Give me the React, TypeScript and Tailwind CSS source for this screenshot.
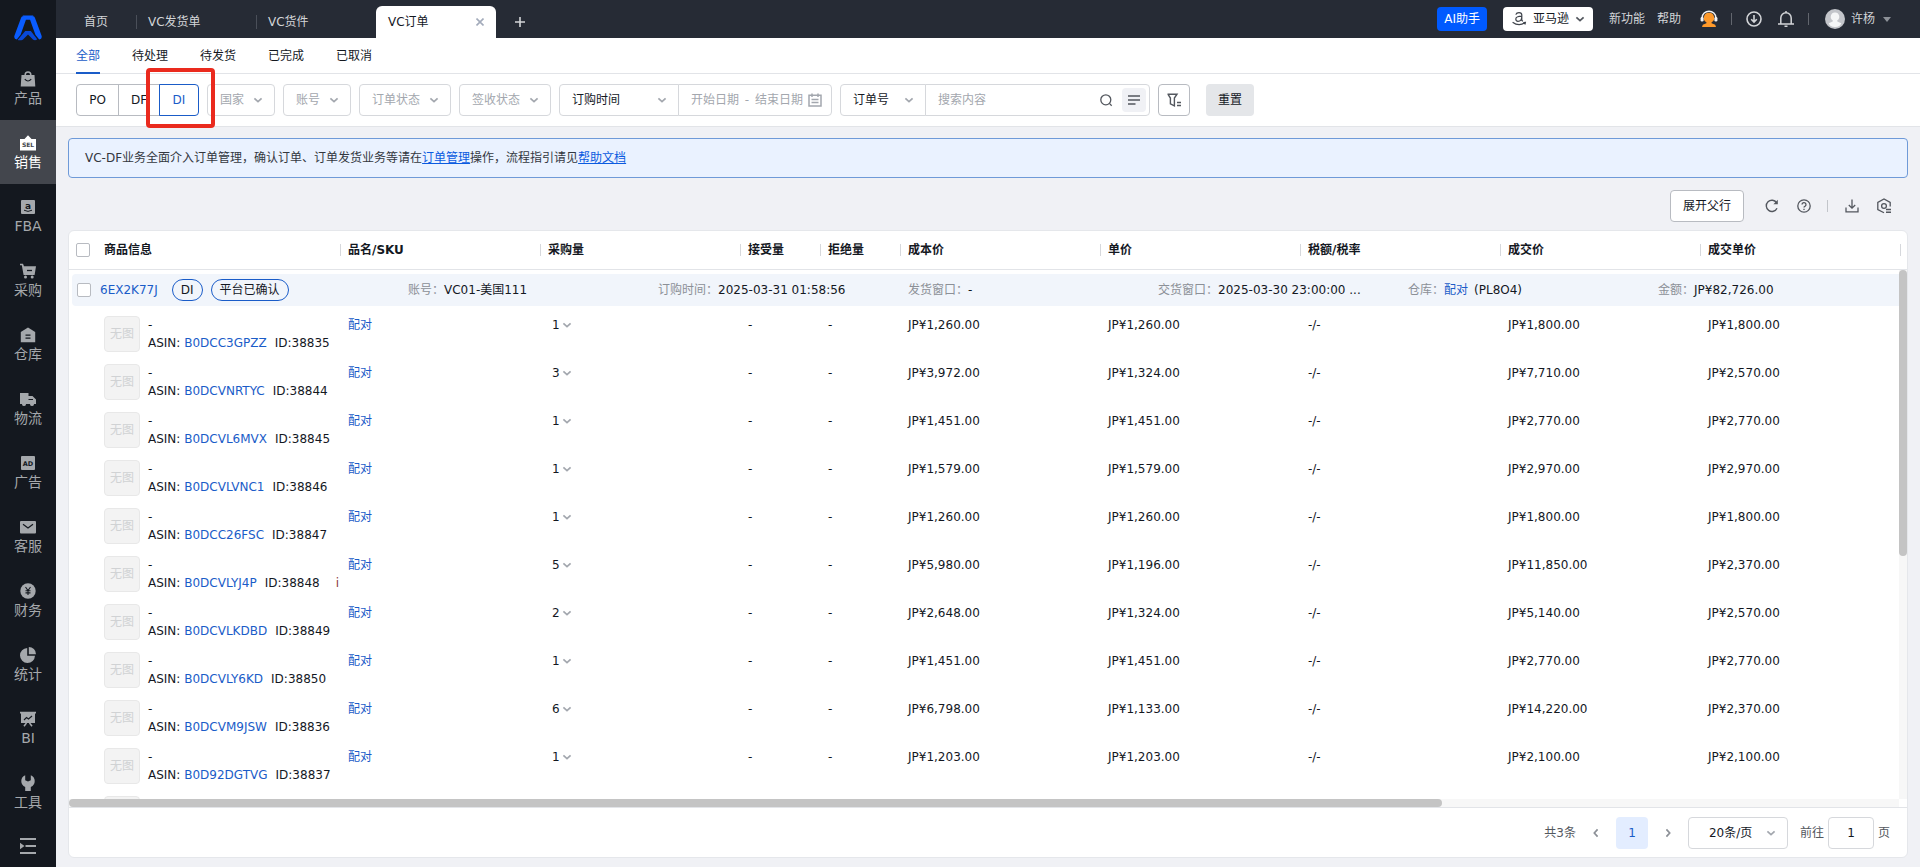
import { ReactNode } from "react";
import clsx from "clsx";

type IconProps = { className?: string };

const Chevron = ({ className }: IconProps) => (
  <svg viewBox="0 0 10 10" className={clsx("h-2.5 w-2.5", className)} fill="none" stroke="currentColor" strokeWidth="1.7">
    <path d="M1.4 3.4 5 6.7l3.6-3.3" />
  </svg>
);

const Logo = () => (
  <svg viewBox="0 0 28 26" className="h-[26px] w-7">
    <path d="M8.6 1.2h4.6L6.6 19.8 2.8 24.6Q-.6 24 .5 20.4L7 3Q7.5 1.5 8.6 1.2Z" fill="#0a5cff" />
    <path d="M19.4 1.2h-4.6l6.6 18.6 3.8 4.8q3.4-.6 2.3-4.2L21 3q-.5-1.5-1.6-1.8Z" fill="#0a5cff" />
    <path d="M8.6.6h10.8l-3 4.2h-4.8Z" fill="#0a5cff" />
    <path d="M11.2 16h5.6l6.4 8.2q-1.6 1.6-4 .6L14 19.4l-5.2 5.4q-2.4 1-5.2.2Z" fill="#0848d8" />
  </svg>
);

const navItems: { label: string; icon: ReactNode }[] = [
  {
    label: "产品",
    icon: (
      <>
        <path d="M5.2 4.5V3.8a2.8 2.8 0 0 1 5.6 0v.7" fill="none" stroke="currentColor" strokeWidth="1.5" />
        <path d="M1.5 4h13l.8 11.5H.7Z" />
        <path d="M4.8 8.2q3.2 3.6 6.4 0" fill="none" stroke="#14181f" strokeWidth="1.2" />
      </>
    ),
  },
  {
    label: "销售",
    icon: (
      <>
        <path d="M0 4h4.5L8 .3 11.5 4H16v11.5H0Z" />
        <text x="8" y="11.8" textAnchor="middle" fontSize="6" fontWeight="700" fill="#43464d">SEL</text>
      </>
    ),
  },
  {
    label: "FBA",
    icon: (
      <>
        <rect x="1" y="1" width="14" height="14" rx="1" />
        <text x="8" y="9.5" textAnchor="middle" fontSize="9" fontWeight="700" fill="#14181f">a</text>
        <path d="M4 11.2q4 2.4 8 0" fill="none" stroke="#14181f" />
      </>
    ),
  },
  {
    label: "采购",
    icon: (
      <>
        <path d="M0 .8h3l1 2.4h12l-1.4 8.8H3.6L1.8 2.2H0Z" />
        <circle cx="5.5" cy="14" r="1.5" />
        <circle cx="12.2" cy="14" r="1.5" />
        <path d="M7 7.5h5" stroke="#14181f" strokeWidth="1.3" />
      </>
    ),
  },
  {
    label: "仓库",
    icon: (
      <>
        <path d="M8 .6 15.2 5v10.2H.8V5Z" />
        <path d="M5.5 8.2h5M5.5 11.2h5" stroke="#14181f" strokeWidth="1.2" />
      </>
    ),
  },
  {
    label: "物流",
    icon: (
      <>
        <path d="M0 2h8.5v3h4L16 8.5V13H0Z" />
        <circle cx="4" cy="13.2" r="1.9" />
        <circle cx="12" cy="13.2" r="1.9" />
        <path d="M8.5 8.5h4.5" stroke="#14181f" />
      </>
    ),
  },
  {
    label: "广告",
    icon: (
      <>
        <rect x="1" y="1" width="14" height="14" rx="1" />
        <text x="8" y="10.5" textAnchor="middle" fontSize="6.5" fontWeight="700" fill="#14181f">AD</text>
      </>
    ),
  },
  {
    label: "客服",
    icon: (
      <>
        <rect x="0" y="2" width="16" height="12.5" rx="1" />
        <path d="M3 5.2 8 9l5-3.8" fill="none" stroke="#14181f" strokeWidth="1.2" />
      </>
    ),
  },
  {
    label: "财务",
    icon: (
      <>
        <circle cx="8" cy="8" r="7.7" />
        <path d="M5.5 4 8 7.5 10.5 4M8 7.5V12M5.5 7.8h5M5.5 9.9h5" fill="none" stroke="#14181f" strokeWidth="1.1" />
      </>
    ),
  },
  {
    label: "统计",
    icon: (
      <>
        <path d="M7.2 1v7.8H15A7.5 7.5 0 1 1 7.2 1Z" />
        <path d="M8.8 0A7.2 7.2 0 0 1 16 7.2H8.8Z" />
      </>
    ),
  },
  {
    label: "BI",
    icon: (
      <>
        <path d="M0 .8h16v1.7h-1V12H1V2.5H0Z" />
        <path d="M6.5 12 4 15.3M9.5 12l2.5 3.3" stroke="currentColor" strokeWidth="1.5" />
        <path d="m4 9 2.5-2.5 2 1.5L12 5" fill="none" stroke="#14181f" strokeWidth="1.1" />
      </>
    ),
  },
  {
    label: "工具",
    icon: <path d="M5.2.2v5L8 6.6l2.8-1.4v-5A6.4 6.4 0 0 1 10.8 12v4H5.2v-4A6.4 6.4 0 0 1 5.2.2Z" />,
  },
];

const columns = ["商品信息", "品名/SKU", "采购量", "接受量", "拒绝量", "成本价", "单价", "税额/税率", "成交价", "成交单价"];

const rows = [
  { asin: "B0DCC3GPZZ", id: "38835", qty: 1, cost: "1,260.00", unit: "1,260.00", deal: "1,800.00", dealUnit: "1,800.00" },
  { asin: "B0DCVNRTYC", id: "38844", qty: 3, cost: "3,972.00", unit: "1,324.00", deal: "7,710.00", dealUnit: "2,570.00" },
  { asin: "B0DCVL6MVX", id: "38845", qty: 1, cost: "1,451.00", unit: "1,451.00", deal: "2,770.00", dealUnit: "2,770.00" },
  { asin: "B0DCVLVNC1", id: "38846", qty: 1, cost: "1,579.00", unit: "1,579.00", deal: "2,970.00", dealUnit: "2,970.00" },
  { asin: "B0DCC26FSC", id: "38847", qty: 1, cost: "1,260.00", unit: "1,260.00", deal: "1,800.00", dealUnit: "1,800.00" },
  { asin: "B0DCVLYJ4P", id: "38848", qty: 5, cost: "5,980.00", unit: "1,196.00", deal: "11,850.00", dealUnit: "2,370.00", mark: "i" },
  { asin: "B0DCVLKDBD", id: "38849", qty: 2, cost: "2,648.00", unit: "1,324.00", deal: "5,140.00", dealUnit: "2,570.00" },
  { asin: "B0DCVLY6KD", id: "38850", qty: 1, cost: "1,451.00", unit: "1,451.00", deal: "2,770.00", dealUnit: "2,770.00" },
  { asin: "B0DCVM9JSW", id: "38836", qty: 6, cost: "6,798.00", unit: "1,133.00", deal: "14,220.00", dealUnit: "2,370.00" },
  { asin: "B0D92DGTVG", id: "38837", qty: 1, cost: "1,203.00", unit: "1,203.00", deal: "2,100.00", dealUnit: "2,100.00" },
];

const Sidebar = () => (
  <aside className="flex w-14 shrink-0 flex-col bg-[#14181f] text-[#a5a8ac]">
    <div className="flex h-14 items-center justify-center">
      <Logo />
    </div>
    <nav className="flex flex-col">
      {navItems.map((item) => (
        <a
          key={item.label}
          href="#"
          className={clsx(
            "flex h-16 flex-col items-center pt-[15px]",
            item.label === "销售" && "bg-[#43464d] text-white",
          )}
        >
          <svg viewBox="0 0 16 16" className="h-4 w-4" fill="currentColor">
            {item.icon}
          </svg>
          <span className="text-sm leading-[22px]">{item.label}</span>
        </a>
      ))}
    </nav>
    <button aria-label="展开菜单" className="flex flex-1 items-center justify-center">
      <svg viewBox="0 0 16 16" className="h-4 w-4" fill="currentColor">
        <path d="M0 0h16v2H0ZM5.5 7H16v2H5.5ZM0 14h16v2H0ZM0 4.8 4.5 8 0 11.2Z" />
      </svg>
    </button>
  </aside>
);

const TopBar = () => (
  <header className="flex h-[38px] shrink-0 items-end bg-[#262b35] text-[#d3d5d8]">
    <a href="#" className="flex h-8 w-20 items-center justify-center">首页</a>
    {["VC发货单", "VC货件"].map((tab) => (
      <a key={tab} href="#" className="flex h-8 w-[120px] items-center">
        <span className="h-3.5 w-px bg-[#4a4f59]" />
        <span className="ml-[11px]">{tab}</span>
      </a>
    ))}
    <div className="flex h-8 w-[120px] items-center justify-between rounded-t-md bg-white px-3 text-[#14181f]">
      <a href="#">VC订单</a>
      <button aria-label="关闭">
        <svg viewBox="0 0 8 8" className="h-2 w-2" stroke="#a3abbb" strokeWidth="1.6">
          <path d="m.5.5 7 7m0-7-7 7" />
        </svg>
      </button>
    </div>
    <button aria-label="新增标签" className="flex h-8 w-12 items-center justify-center">
      <svg viewBox="0 0 10 10" className="h-2.5 w-2.5" stroke="currentColor" strokeWidth="1.6">
        <path d="M5 0v10M0 5h10" />
      </svg>
    </button>

    <div className="ml-auto flex h-full items-center pr-[29px]">
      <button className="h-6 rounded bg-[#005aff] px-[7px] text-white">AI助手</button>
      <button className="ml-4 flex h-6 items-center rounded bg-white px-2 text-[#14181f]">
        <svg viewBox="0 0 16 16" className="h-4 w-4" fill="none" stroke="#3f444c" strokeWidth="1.2">
          <path d="M4.8 3.6Q5.5 1.6 8 1.6q2.8 0 2.8 2.4v5.2l1 1.2M10.8 5.2q-6 0-6 2.9 0 2.2 2.2 2.2 3.8 0 3.8-5.1M1.6 11.2q6 4.6 12.3.6M12.2 11.5l2.2-.2-.5 2.2" />
        </svg>
        <span className="ml-1.5">亚马逊</span>
        <Chevron className="ml-1.5 text-[#53575e]" />
      </button>
      <a href="#" className="ml-4">新功能</a>
      <a href="#" className="ml-3">帮助</a>
      <button aria-label="客服" className="ml-[19px]">
        <svg viewBox="0 0 18 18" className="h-[18px] w-[18px]">
          <path d="M2.2 9V7.5a6.8 6.3 0 0 1 13.6 0V9" fill="none" stroke="#f1f2f4" strokeWidth="1.5" />
          <rect x=".6" y="7" width="3" height="4.5" rx="1.3" fill="#f1f2f4" />
          <rect x="14.4" y="7" width="3" height="4.5" rx="1.3" fill="#f1f2f4" />
          <path d="M9 2.8a4.8 5 0 0 1 2.6 9.4v1l3.6 1.6.8 2.2H2l.8-2.2 3.6-1.6v-1A4.800 5 0 0 1 9 2.8Z" fill="#ff9a2b" />
        </svg>
      </button>
      <span className="ml-[13px] h-3 w-px bg-[#62666e]" />
      <button aria-label="下载中心" className="ml-3.5">
        <svg viewBox="0 0 16 16" className="h-4 w-4" fill="none" stroke="currentColor" strokeWidth="1.6">
          <circle cx="8" cy="8" r="7" />
          <path d="M8 4v7M5.2 8.2 8 11l2.8-2.8" />
        </svg>
      </button>
      <button aria-label="消息" className="ml-4">
        <svg viewBox="0 0 16 16" className="h-4 w-4" fill="none" stroke="currentColor" strokeWidth="1.5">
          <path d="M0 13h16M2.800 13V7a5.2 5.2 0 0 1 10.4 0v6M8 2V0M6.5 15.2h3" />
        </svg>
      </button>
      <span className="ml-3.5 h-3 w-px bg-[#62666e]" />
      <button className="ml-4 flex items-center gap-1.5">
        <svg viewBox="0 0 20 20" className="h-5 w-5">
          <circle cx="10" cy="10" r="10" fill="#c3c5ca" />
          <path d="M10 3.5a4 4.2 0 0 1 2.3 7.8v1.2l4 1.7-1.3 2.2q-5 3-10 0l-1.3-2.2 4-1.7v-1.2A4 4.2 0 0 1 10 3.5Z" fill="#f5f6f7" />
        </svg>
        <span>许杨</span>
        <svg viewBox="0 0 8 5" className="ml-0.5 h-[5px] w-2" fill="#8d9198">
          <path d="M0 0h8L4 5Z" />
        </svg>
      </button>
    </div>
  </header>
);

type FilterSelectProps = { label: string; className?: string; dark?: boolean };

const FilterSelect = ({ label, className, dark }: FilterSelectProps) => (
  <div className={clsx("relative h-8 border border-[#d6d8dc] bg-white", dark ? "text-[#14181f]" : "text-[#a3a7ae]", className)}>
    <select aria-label={label} className="h-full w-full appearance-none pl-3 outline-none">
      <option>{label}</option>
    </select>
    <Chevron className="pointer-events-none absolute right-[11px] top-2.5 text-[#a3a7ae]" />
  </div>
);

const FilterBar = () => (
  <div className="flex h-[53px] shrink-0 items-center gap-2 border-b border-[#e2e4e8] bg-white px-5">
    <div className="relative flex">
      <button className="h-8 w-[43px] rounded-l border border-[#b8bbc1]">PO</button>
      <button className="-ml-px h-8 w-[42px] border border-[#b8bbc1]">DF</button>
      <button className="-ml-px h-8 w-10 rounded-r border border-[#1a5cc8] text-[#1a5cc8]">DI</button>
      <div className="pointer-events-none absolute -bottom-3 -right-4 -top-4 z-10 w-[69px] rounded border-4 border-[#ea2a1e]" />
    </div>
    <FilterSelect label="国家" className="w-[68px] rounded" />
    <FilterSelect label="账号" className="w-[68px] rounded" />
    <FilterSelect label="订单状态" className="w-[92px] rounded" />
    <FilterSelect label="签收状态" className="w-[92px] rounded" />
    <div className="flex">
      <FilterSelect label="订购时间" dark className="w-[120px] rounded-l" />
      <div className="-ml-px flex h-8 w-[154px] items-center rounded-r border border-[#d6d8dc] pl-3 pr-[9px] text-[#a3a7ae]">
        <input aria-label="开始日期" placeholder="开始日期" className="w-12 outline-none placeholder:text-[#a3a7ae]" />
        <span className="w-4 text-center">-</span>
        <input aria-label="结束日期" placeholder="结束日期" className="w-12 outline-none placeholder:text-[#a3a7ae]" />
        <svg viewBox="0 0 14 14" className="ml-auto h-3.5 w-3.5" fill="none" stroke="currentColor" strokeWidth="1.5">
          <path d="M1 2.2h12v10.800H1ZM4 .5v3.500M10 .5v3.500M3.500 6.500h7M3.500 9.500h7" />
        </svg>
      </div>
    </div>
    <div className="flex">
      <FilterSelect label="订单号" dark className="w-[86px] rounded-l" />
      <div className="-ml-px flex h-8 w-[225px] items-center rounded-r border border-[#d6d8dc] pl-3 pr-[3px]">
        <input aria-label="搜索内容" placeholder="搜索内容" className="min-w-0 flex-1 outline-none placeholder:text-[#a3a7ae]" />
        <button aria-label="搜索" className="mr-[9px]">
          <svg viewBox="0 0 14 14" className="h-3.5 w-3.5" fill="none" stroke="#53575e" strokeWidth="1.3">
            <circle cx="6.8" cy="6.8" r="5" />
            <path d="m10.400 10.400 2.300 2.300" />
          </svg>
        </button>
        <button aria-label="批量搜索" className="flex h-6 w-6 items-center justify-center rounded bg-[#f0f1f5]">
          <svg viewBox="0 0 12 10" className="h-2.5 w-3" stroke="#53575e" strokeWidth="1.6">
            <path d="M0 1h12M0 5h12M0 9h7.500" />
          </svg>
        </button>
      </div>
    </div>
    <button aria-label="更多筛选" className="flex h-8 w-8 items-center justify-center rounded border border-[#b8bbc1]">
      <svg viewBox="0 0 14 14" className="h-3.5 w-3.5" fill="none" stroke="#53575e" strokeWidth="1.400">
        <path d="M.5 1.2h9.500L7.400 5v7.800l-4-2V5L.9 1.2M10 9.500h4M10 12.500h4" />
      </svg>
    </button>
    <button className="ml-2 h-8 w-12 rounded bg-[#e4e6e9]">重置</button>
  </div>
);

const Toolbar = () => (
  <div className="flex items-center justify-end pr-4 text-[#53575e]">
    <button className="h-8 rounded border border-[#b8bbc1] bg-white px-3 text-[#14181f]">展开父行</button>
    <button aria-label="刷新" className="ml-[21px]">
      <svg viewBox="0 0 14 14" className="h-3.5 w-3.5" fill="none" stroke="currentColor" strokeWidth="1.4">
        <path d="M12 9.2A5.600 5.600 0 1 1 11.600 3.800" />
        <path d="M12.800.8v4.400H8.400Z" fill="currentColor" stroke="none" />
      </svg>
    </button>
    <button aria-label="帮助" className="ml-[18px]">
      <svg viewBox="0 0 14 14" className="h-3.5 w-3.5" fill="none" stroke="currentColor" strokeWidth="1.3">
        <circle cx="7" cy="7" r="6.200" />
        <path d="M5 5.600a2 1.900 0 1 1 2.900 1.700q-.9.400-.9 1.300M7 9.700v1.200" />
      </svg>
    </button>
    <span className="ml-4 h-3 w-px bg-[#c2c5ca]" />
    <button aria-label="导出" className="ml-[17px]">
      <svg viewBox="0 0 14 14" className="h-3.5 w-3.5" fill="none" stroke="currentColor" strokeWidth="1.3">
        <path d="M7 .5v8.500M3.800 6 7 9.200 10.200 6M1 8.500v4.300h12V8.500" />
      </svg>
    </button>
    <button aria-label="列设置" className="ml-[17px]">
      <svg viewBox="0 0 16 16" className="h-4 w-4" fill="none" stroke="currentColor" strokeWidth="1.3">
        <path d="M8 14.800 1.800 11.500v-7L8 1l6.200 3.500v4" />
        <circle cx="8" cy="8" r="2.400" />
        <path d="M10 11.500h5M10 14.300h5" strokeWidth="1.500" />
      </svg>
    </button>
  </div>
);

// shared by the fixed header and the scrolling body
const Cols = () => (
  <colgroup>
    <col className="w-[27px]" />
    <col className="w-[244px]" />
    <col className="w-[200px]" />
    <col className="w-[200px]" />
    <col className="w-20" />
    <col className="w-20" />
    <col className="w-[200px]" />
    <col className="w-[200px]" />
    <col className="w-[200px]" />
    <col className="w-[200px]" />
    <col />
  </colgroup>
);

const Checkbox = ({ label }: { label: string }) => (
  <input type="checkbox" aria-label={label} className="block h-3.5 w-3.5 shrink-0 appearance-none rounded-xs border border-[#b8bbc1] bg-white" />
);

const GroupField = ({ label, children }: { label: string; children: ReactNode }) => (
  <div className="w-[250px] shrink-0 whitespace-nowrap">
    <span className="text-[#8c9097]">{label}：</span>
    {children}
  </div>
);

const GroupRow = () => (
  <div className="my-1 ml-[3px] flex h-8 items-center overflow-hidden rounded-l bg-[#f1f5fb]">
    <div className="flex w-[336px] shrink-0 items-center pl-[5px]">
      <Checkbox label="选择订单" />
      <a href="#" className="ml-[9px] text-[#1a5cc8]">6EX2K77J</a>
      <span className="ml-3.5 flex h-[22px] items-center rounded-full border border-[#1a5cc8] px-2">DI</span>
      <span className="ml-2 flex h-[22px] items-center rounded-full border border-[#1a5cc8] px-2">平台已确认</span>
    </div>
    <GroupField label="账号">VC01-美国111</GroupField>
    <GroupField label="订购时间">2025-03-31 01:58:56</GroupField>
    <GroupField label="发货窗口">-</GroupField>
    <GroupField label="交货窗口">2025-03-30 23:00:00 ...</GroupField>
    <GroupField label="仓库">
      <a href="#" className="mr-1.5 text-[#1a5cc8]">配对</a>(PL8O4)
    </GroupField>
    <GroupField label="金额">JP¥82,726.00</GroupField>
  </div>
);

const Thumb = ({ children }: { children?: ReactNode }) => (
  <div className="flex h-9 w-9 shrink-0 items-center justify-center rounded border border-[#e8e8e8] bg-[#f3f3f3] text-[#d0d2d4]">
    {children}
  </div>
);

const OrderTable = () => (
  <section className="mt-2 flex min-h-0 flex-1 flex-col rounded-md border border-[#e5e7eb] bg-white">
    <div className="shrink-0 border-b border-[#e2e4e8]">
      <table className="w-full table-fixed text-left">
        <Cols />
        <thead>
          <tr className="h-[38px]">
            <th className="pl-[7px]">
              <Checkbox label="全选" />
            </th>
            {columns.map((name, i) => (
              <th key={name} className={clsx("p-0 font-bold", i === 0 && "pl-2")}>
                <div className="flex items-center">
                  {i > 0 && <span className="mr-[7px] h-3 w-px bg-[#d6d8dc]" />}
                  {name}
                  {i === columns.length - 1 && <span className="ml-auto mr-1.5 h-3 w-px bg-[#d6d8dc]" />}
                </div>
              </th>
            ))}
          </tr>
        </thead>
      </table>
    </div>

    <div className="grid min-h-0 flex-1 grid-cols-[1fr_8px] grid-rows-[1fr_8px]">
      <div className="min-h-0 overflow-hidden">
        <GroupRow />
        <table className="w-full table-fixed text-left leading-[18px]">
          <Cols />
          <tbody>
            {rows.map((row) => (
              <tr key={row.asin} className="h-12 align-top [&>td]:pl-2 [&>td]:pt-1.5">
                <td />
                <td>
                  <div className="flex gap-2 overflow-hidden whitespace-nowrap">
                    <Thumb>无图</Thumb>
                    <div>
                      <div>-</div>
                      <div>
                        ASIN: <a href="#" className="text-[#1a5cc8]">{row.asin}</a>
                        <span className="ml-2">ID:{row.id}</span>
                        {row.mark && <span className="ml-4 text-[#8a3a3a]">{row.mark}</span>}
                      </div>
                    </div>
                  </div>
                </td>
                <td>
                  <a href="#" className="text-[#1a5cc8]">配对</a>
                </td>
                <td>
                  <button className="flex items-center gap-0.5 pl-1">
                    {row.qty}
                    <Chevron className="text-[#a3a7ae]" />
                  </button>
                </td>
                <td>-</td>
                <td>-</td>
                <td>JP¥{row.cost}</td>
                <td>JP¥{row.unit}</td>
                <td>-/-</td>
                <td>JP¥{row.deal}</td>
                <td>JP¥{row.dealUnit}</td>
              </tr>
            ))}
            <tr className="h-12 align-top">
              <td />
              <td className="pl-2 pt-1.5">
                <Thumb />
              </td>
            </tr>
          </tbody>
        </table>
      </div>
      <div className="bg-[#f7f7f7]">
        <div className="h-[54%] rounded-full bg-[#c4c4c4]" />
      </div>
      <div className="bg-[#f7f7f7]">
        <div className="h-full w-3/4 rounded-full bg-[#c4c4c4]" />
      </div>
    </div>

    <footer className="flex h-[50px] shrink-0 items-center justify-end border-t border-[#e2e4e8] pr-[17px] text-[#53575e]">
      <span>共3条</span>
      <button aria-label="上一页" className="flex h-8 w-10 items-center justify-center">
        <Chevron className="rotate-90 text-[#8c9097]" />
      </button>
      <button className="h-8 w-8 rounded bg-[#e3edff] text-[#1a5cc8]">1</button>
      <button aria-label="下一页" className="flex h-8 w-10 items-center justify-center">
        <Chevron className="-rotate-90 text-[#8c9097]" />
      </button>
      <div className="relative h-8 w-[100px] rounded-sm border border-[#d6d8dc] text-[#14181f]">
        <select aria-label="每页条数" className="h-full w-full appearance-none pl-5 outline-none">
          <option>20条/页</option>
        </select>
        <Chevron className="pointer-events-none absolute right-[11px] top-2.5 text-[#a3a7ae]" />
      </div>
      <label htmlFor="page" className="ml-3">前往</label>
      <input id="page" defaultValue="1" className="mx-1 h-8 w-[46px] rounded border border-[#d6d8dc] text-center text-[#14181f] outline-none" />
      <span>页</span>
    </footer>
  </section>
);

const App = () => {
  return (
    <div className="flex h-screen overflow-hidden bg-[#f0f1f5] font-['DejaVu_Sans','Noto_Sans_CJK_SC',sans-serif] text-xs text-[#14181f]">
      <Sidebar />
      <div className="flex min-w-0 flex-1 flex-col">
        <TopBar />
        <nav className="flex h-9 shrink-0 gap-8 border-b border-[#e2e4e8] bg-white px-5">
          {["全部", "待处理", "待发货", "已完成", "已取消"].map((tab, i) => (
            <a
              key={tab}
              href="#"
              className={clsx("flex h-9 items-center", i === 0 && "border-b-2 border-[#1a5cc8] pt-0.5 text-[#1a5cc8]")}
            >
              {tab}
            </a>
          ))}
        </nav>
        <FilterBar />
        <main className="flex min-h-0 flex-1 flex-col px-3 pb-[9px] pt-[11px]">
          <div className="mb-3 flex h-10 shrink-0 items-center rounded border border-[#6f9ad8] bg-[#eaf2ff] px-4 text-[#33373e]">
            <p>
              VC-DF业务全面介入订单管理，确认订单、订单发货业务等请在
              <a href="#" className="text-[#0b5be0] underline">订单管理</a>
              操作，流程指引请见
              <a href="#" className="text-[#0b5be0] underline">帮助文档</a>
            </p>
          </div>
          <Toolbar />
          <OrderTable />
        </main>
      </div>
    </div>
  );
};

export default App;
